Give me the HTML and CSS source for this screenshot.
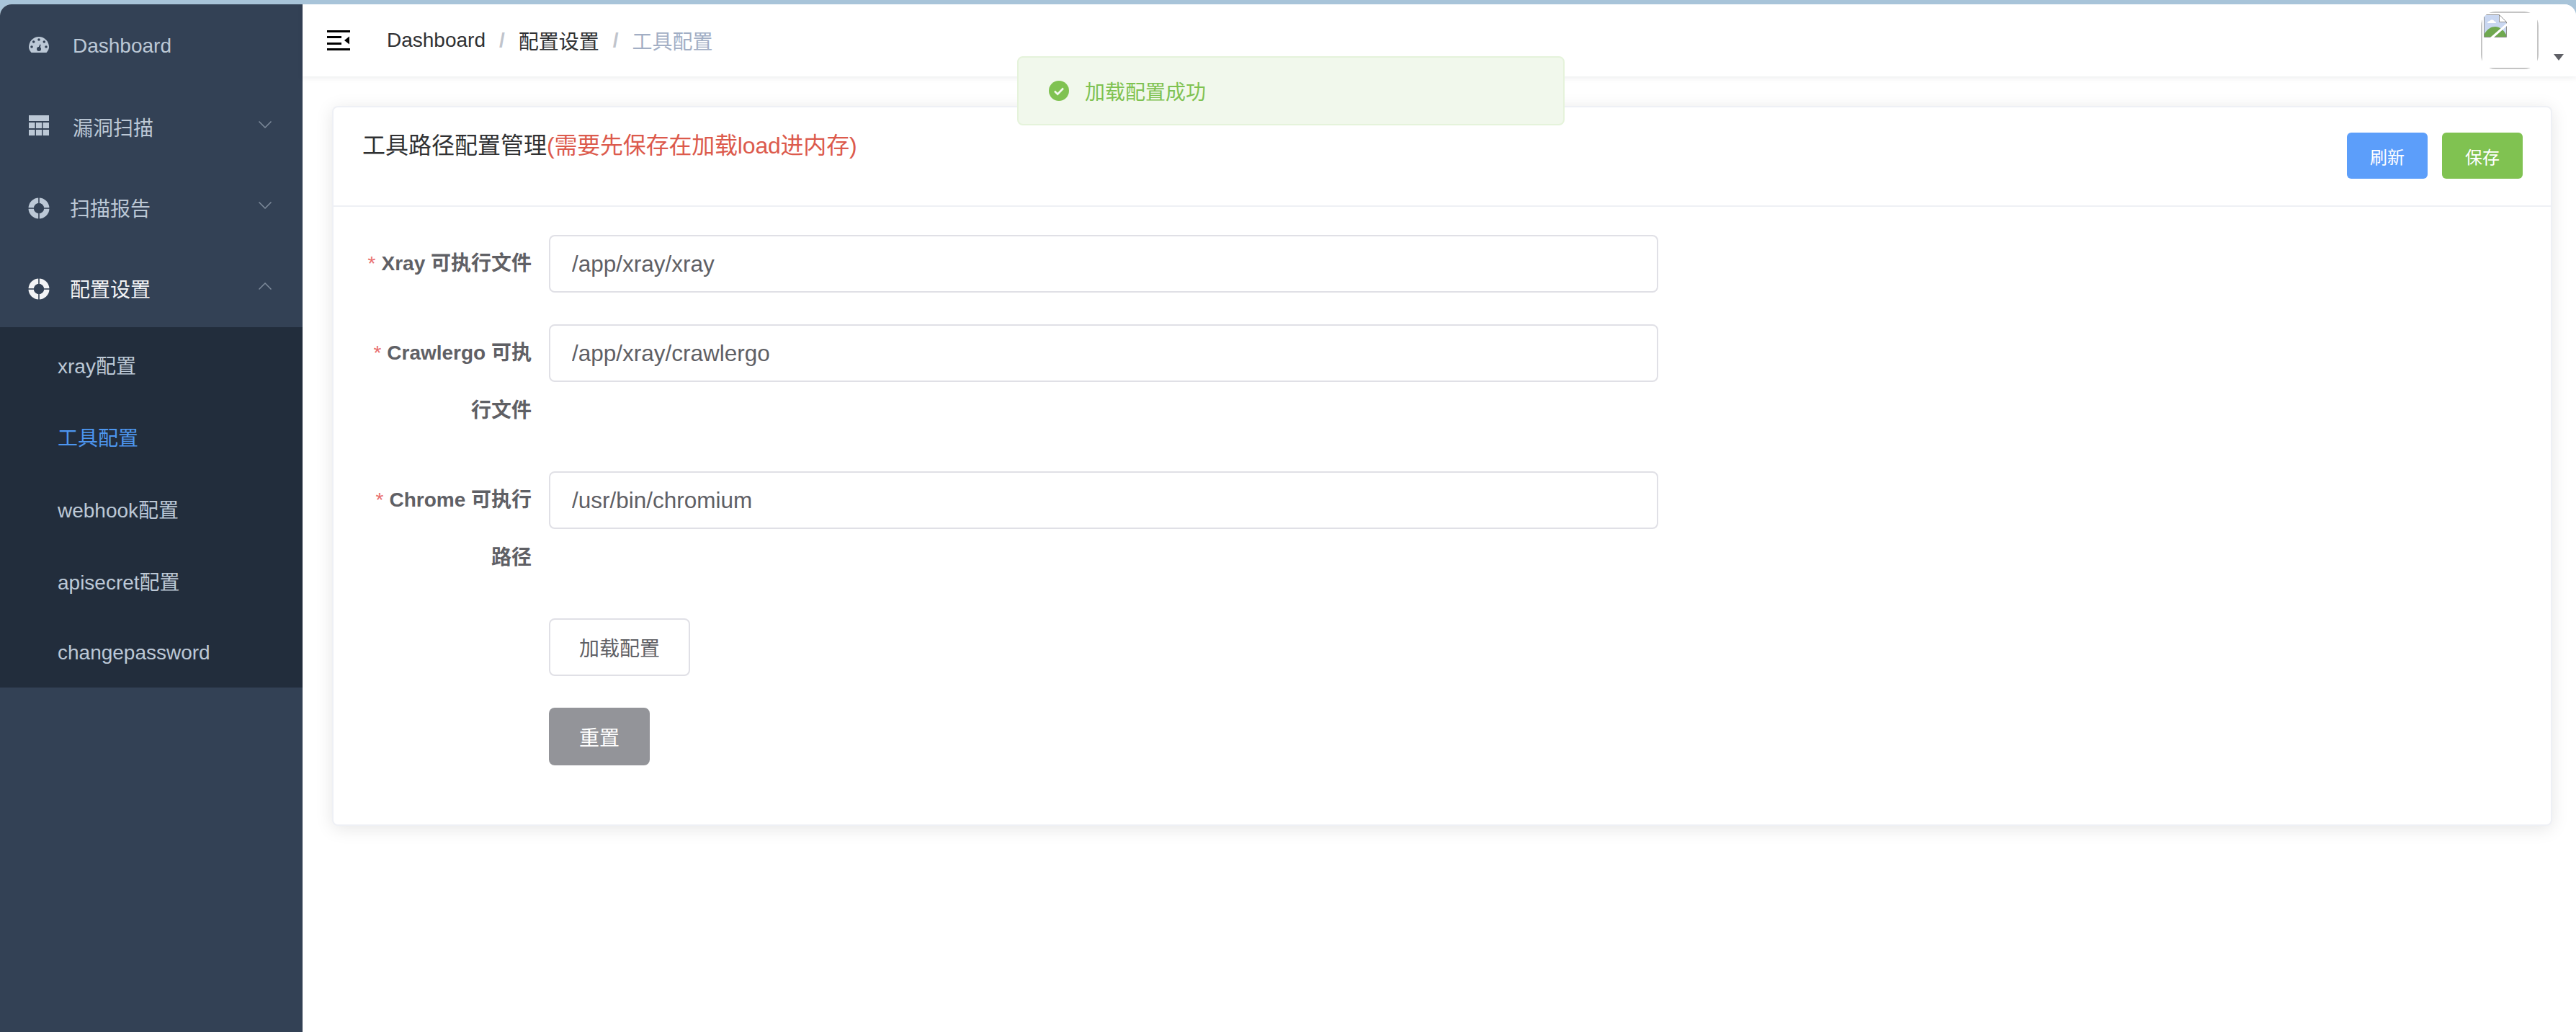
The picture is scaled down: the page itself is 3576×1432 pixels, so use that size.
FILE: index.html
```html
<!DOCTYPE html>
<html lang="zh-CN">
<head>
<meta charset="utf-8">
<title>工具配置</title>
<link rel="stylesheet" href="styles.css">
</head>
<body>
<div class="window">
  <aside class="sidebar">
    <ul class="menu">
      <li class="menu-item">
        <svg class="icon icon-svg icon-gauge" viewBox="0 0 28 22"><path class="fill" d="M3.5 22C1.2 19.4 0 17.2 0 14.3 0 6.4 6.3 0 14 0s14 6.4 14 14.3c0 2.9-1.2 5.1-3.5 7.7z"/><g class="cut"><circle cx="14" cy="4" r="1.8"/><circle cx="6.7" cy="7" r="1.8"/><circle cx="21.3" cy="7" r="1.8"/><circle cx="4" cy="14" r="1.8"/><circle cx="24" cy="14" r="1.8"/><circle cx="14" cy="17" r="3"/><path d="M13 16l2.4-5.5 1.2.4L15.4 17z"/></g></svg>
        <span class="menu-text">Dashboard</span>
      </li>
      <li class="menu-item">
        <svg class="icon icon-svg icon-table" viewBox="0 0 28 28"><g class="fill"><rect width="28" height="8"/><rect y="10" width="8.5" height="8"/><rect x="10" y="10" width="8" height="8"/><rect x="19.5" y="10" width="8.5" height="8"/><rect y="20" width="8.5" height="8"/><rect x="10" y="20" width="8" height="8"/><rect x="19.5" y="20" width="8.5" height="8"/></g></svg>
        <span class="menu-text">漏洞扫描</span>
        <svg class="chevron" viewBox="0 0 18 10"><path d="M.5.5L9 9l8.5-8.5"/></svg>
      </li>
      <li class="menu-item">
        <svg class="icon icon-font" viewBox="0 0 30 30"><circle class="fill" cx="15" cy="15" r="14.5"/><g class="cut"><circle cx="15" cy="15" r="7"/><rect x="14.2" width="1.6" height="30"/><rect y="14.2" width="30" height="1.6"/></g><circle class="cut" cx="15" cy="15" r="7"/></svg>
        <span class="menu-text">扫描报告</span>
        <svg class="chevron" viewBox="0 0 18 10"><path d="M.5.5L9 9l8.5-8.5"/></svg>
      </li>
      <li class="menu-item is-open">
        <svg class="icon icon-font" viewBox="0 0 30 30"><circle class="fill" cx="15" cy="15" r="14.5"/><g class="cut"><circle cx="15" cy="15" r="7"/><rect x="14.2" width="1.6" height="30"/><rect y="14.2" width="30" height="1.6"/></g><circle class="cut" cx="15" cy="15" r="7"/></svg>
        <span class="menu-text">配置设置</span>
        <svg class="chevron" viewBox="0 0 18 10"><path d="M.5 9.5L9 1l8.5 8.5"/></svg>
      </li>
    </ul>
    <ul class="submenu">
      <li class="submenu-item">xray配置</li>
      <li class="submenu-item is-active">工具配置</li>
      <li class="submenu-item">webhook配置</li>
      <li class="submenu-item">apisecret配置</li>
      <li class="submenu-item">changepassword</li>
    </ul>
  </aside>

  <div class="main">
    <header class="navbar">
      <svg class="hamburger" viewBox="0 0 32 28"><rect width="32" height="3"/><rect y="8" width="20" height="3"/><rect y="17" width="20" height="3"/><rect y="25" width="32" height="3"/><path d="M24 14l7-5.500v11z"/></svg>
      <nav class="breadcrumb">
        <span>Dashboard</span><span class="sep">/</span><span>配置设置</span><span class="sep">/</span><span class="current">工具配置</span>
      </nav>
      <div class="avatar-wrap">
        <div class="avatar">
          <div class="avatar-frame">
            <svg class="broken" viewBox="0 0 32 32">
              <path d="M.5.5h21l10 10v21H.5z" fill="#c9d7f1" stroke="#8e8e8e"/>
              <path d="M21.500.5v10h10z" fill="#fff" stroke="#8e8e8e"/>
              <path d="M5 12c0-2 2-3 3.500-3 1-2 5-2 6 .500 1.500 0 2.500 1 2.500 2.500z" fill="#fff"/>
              <path d="M1 31V27c4-7 9-10 15-10 6 0 11 4 15 11v3z" fill="#6fa84f"/>
              <path d="M14 32L32 16v-4L9 32z" fill="#fff"/>
            </svg>
          </div>
        </div>
        <i class="caret"></i>
      </div>
    </header>

    <main class="content">
      <section class="card">
        <div class="card-header">
          <h2 class="card-title">工具路径配置管理<span class="title-note">(需要先保存在加载load进内存)</span></h2>
          <div class="card-actions">
            <button class="btn-small btn-blue" type="button">刷新</button>
            <button class="btn-small btn-green" type="button">保存</button>
          </div>
        </div>
        <form class="card-body">
          <div class="form-row">
            <label class="form-label"><span class="req">*</span>Xray 可执行文件</label>
            <input class="form-input" type="text" value="/app/xray/xray">
          </div>
          <div class="form-row">
            <label class="form-label"><span class="req">*</span>Crawlergo 可执行文件</label>
            <input class="form-input" type="text" value="/app/xray/crawlergo">
          </div>
          <div class="form-row">
            <label class="form-label"><span class="req">*</span>Chrome 可执行路径</label>
            <input class="form-input" type="text" value="/usr/bin/chromium">
          </div>
          <div class="form-row form-row-btn">
            <button class="btn btn-plain" type="button">加载配置</button>
          </div>
          <div class="form-row form-row-btn">
            <button class="btn btn-gray" type="button">重置</button>
          </div>
        </form>
      </section>
    </main>
  </div>
</div>

<div class="toast">
  <svg class="toast-icon" viewBox="0 0 28 28"><circle cx="14" cy="14" r="14" fill="#7fc251"/><path d="M8 14.500l4.200 4.200L20 10.500" fill="none" stroke="#f4f9ef" stroke-width="2.600"/></svg>
  <span>加载配置成功</span>
</div>
</body>
</html>
```

FILE: styles.css
```css
* { box-sizing: border-box; }

html, body {
  height: 100%;
  margin: 0;
}

body {
  padding-top: 6px;
  background: #a8c4d9;
  font-family: "Liberation Sans", "Noto Sans CJK SC", sans-serif;
  font-size: 28px;
  color: #303133;
  overflow: hidden;
}

ul { list-style: none; margin: 0; padding: 0; }

.window {
  display: flex;
  height: 1426px;
  background: #fff;
  border-radius: 16px 16px 0 0;
  overflow: hidden;
}

/* Sidebar */
.sidebar {
  flex: 0 0 420px;
  background: #334155;
  color: #bcc8d6;
}

.menu-item {
  display: flex;
  align-items: center;
  height: 112px;
}

.menu-text { position: relative; top: 2px; }

.is-open { color: #f2f3f5; }

.icon { display: block; flex: none; }
.icon .fill, .icon.fill { fill: #bcc8d6; }
.is-open .icon .fill { fill: #f2f3f5; }
.icon .cut, .icon.cut { fill: #334155; }

.icon-svg {
  width: 28px;
  margin-left: 40px;
  margin-right: 33px;
}
.icon-gauge { height: 22px; }
.icon-table { height: 28px; }

.icon-font {
  width: 30px;
  height: 30px;
  margin-left: 39px;
  margin-right: 28px;
  margin-top: 5px;
}

.chevron {
  width: 18px;
  height: 10px;
  margin-left: auto;
  margin-right: 43px;
  margin-top: -3px;
  fill: none;
  stroke: #7e8b9b;
  stroke-width: 1.5;
}

.submenu { background: #222d3c; }

.submenu-item {
  display: flex;
  align-items: center;
  height: 100px;
  padding-left: 80px;
  padding-top: 4px;
}
.submenu-item.is-active { color: #4d96f0; }

/* Main */
.main {
  flex: 1;
  min-width: 0;
  display: flex;
  flex-direction: column;
}

.navbar {
  flex: 0 0 100px;
  display: flex;
  align-items: center;
  padding-left: 34px;
  padding-right: 52px;
  background: #fff;
  box-shadow: 0 2px 8px rgba(0, 21, 41, .08);
  position: relative;
}

.hamburger {
  width: 32px;
  height: 28px;
  fill: #000;
  margin-right: 51px;
}

.breadcrumb { display: flex; align-items: center; color: #303133; }
.breadcrumb .sep {
  margin: 0 19px;
  color: #c0c4cc;
  font-weight: 700;
}
.breadcrumb .current { color: #a2aec4; }

.avatar-wrap {
  margin-left: auto;
  position: relative;
}
.avatar {
  width: 80px;
  height: 80px;
  border-radius: 20px;
  overflow: hidden;
}
.avatar-frame {
  height: 100%;
  border: 2px solid #c4c4c4;
  padding: 2px;
}
.broken { display: block; width: 32px; height: 32px; }
.caret {
  position: absolute;
  right: -35px;
  top: 59px;
  border-style: solid;
  border-width: 9px 7px 0;
  border-color: #5f6066 transparent transparent;
}

.content {
  flex: 1;
  padding: 41px 33px 0 41px;
}

.card {
  border: 2px solid #eef0f5;
  border-radius: 8px;
  background: #fff;
  box-shadow: 0 4px 24px rgba(0, 0, 0, .1);
}

.card-header {
  display: flex;
  justify-content: space-between;
  align-items: flex-start;
  padding: 35px 39px 37px 40px;
  border-bottom: 2px solid #eef0f5;
}

.card-title {
  margin: 0;
  font-size: 32px;
  font-weight: 400;
  line-height: 36px;
  color: #303133;
}
.title-note { color: #dc5a4c; letter-spacing: -.2px; }

.card-actions { display: flex; gap: 20px; }

.btn-small {
  width: 112px;
  height: 64px;
  border: 0;
  border-radius: 6px;
  color: #fff;
  font: 24px "Liberation Sans", "Noto Sans CJK SC", sans-serif;
  padding: 0;
}
.btn-blue { background: #5c9efa; }
.btn-green { background: #80c251; }

.card-body {
  width: 1879px;
  padding: 39px 40px 38px 41px;
}

.form-row {
  display: flex;
  align-items: flex-start;
  margin-bottom: 44px;
}
.form-row-btn { padding-left: 258px; }

.form-label {
  flex: 0 0 258px;
  padding-right: 24px;
  text-align: right;
  font-weight: 700;
  line-height: 80px;
  color: #5f6065;
}
.req {
  color: #e96f6f;
  font-weight: 400;
  margin-right: 8px;
}

.form-input {
  flex: 1;
  min-width: 0;
  height: 80px;
  padding: 0 30px;
  border: 2px solid #e0e0e6;
  border-radius: 8px;
  background: #fff;
  color: #5f6065;
  font: 31.5px "Liberation Sans", "Noto Sans CJK SC", sans-serif;
  outline: none;
}

.btn {
  height: 80px;
  padding: 0 40px;
  border: 2px solid #e0e0e6;
  border-radius: 8px;
  font: 28px "Liberation Sans", "Noto Sans CJK SC", sans-serif;
}
.btn-plain { background: #fff; color: #5f6065; }
.btn-gray { background: #939499; border-color: #939499; color: #fff; }

/* Toast floats over the page */
.toast {
  position: absolute;
  left: 1412px;
  top: 78px;
  width: 760px;
  height: 96px;
  display: flex;
  align-items: center;
  gap: 22px;
  padding-left: 42px;
  background: #f1f8ec;
  border: 2px solid #e5f3db;
  border-radius: 8px;
  color: #7fc251;
}
.toast-icon { width: 28px; height: 28px; flex: none; }
```
